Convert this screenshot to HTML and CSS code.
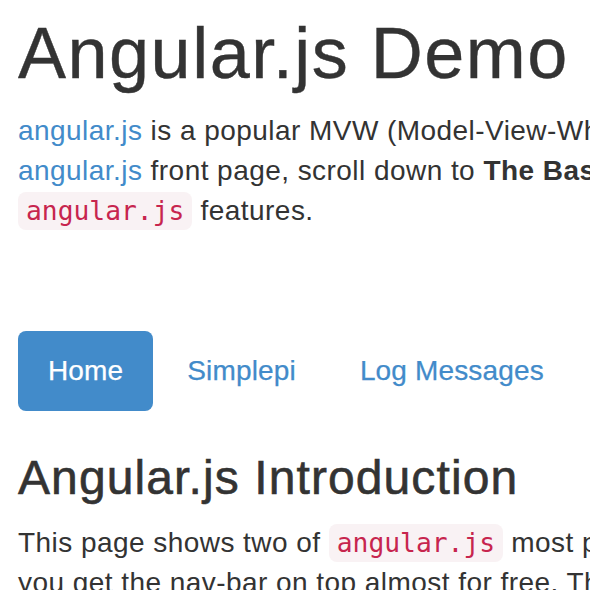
FILE: index.html
```html
<!DOCTYPE html>
<html lang="en">
<head>
<meta charset="utf-8">
<title>Angular.js Demo</title>
<link rel="stylesheet" href="styles.css">
</head>
<body>
<div class="container">
  <h1 class="title">Angular.js Demo</h1>
  <p class="lead-text"><a href="#">angular.js</a> is a popular MVW (Model-View-Whatever) framework from Google. Go to the<br><a href="#">angular.js</a> front page, scroll down to <strong>The Basics</strong> and read about some of the<br><code>angular.js</code> features.</p>
  <ul class="nav-pills">
    <li class="pill active"><a href="#">Home</a></li>
    <li class="pill"><a href="#">Simplepi</a></li>
    <li class="pill"><a href="#">Log Messages</a></li>
  </ul>
  <h2 class="section-title">Angular.js Introduction</h2>
  <p class="body-text">This page shows two of <code>angular.js</code> most powerful features. Using bootstrap,<br>you get the nav-bar on top almost for free. The rest of the page is angular.js.</p>
</div>
</body>
</html>
```
FILE: styles.css
```css
html, body {
  margin: 0;
  padding: 0;
  overflow: hidden;
  background: #fff;
}
body {
  font-family: "Liberation Sans", Arial, sans-serif;
  font-size: 28px;
  line-height: 40px;
  letter-spacing: 0.45px;
  color: #333;
}
.container {
  padding: 0 18px;
  width: 1400px;
}
a {
  color: #428bca;
  text-decoration: none;
}
.title {
  font-size: 72px;
  font-weight: 500;
  line-height: 1.1;
  letter-spacing: 1.5px;
  margin: 14px 0 0;
  -webkit-text-stroke: 0.4px #333;
}
.lead-text {
  margin: 18px 0 0;
  white-space: nowrap;
}
strong {
  font-weight: 700;
}
code {
  font-family: "DejaVu Sans Mono", Menlo, monospace;
  font-size: 26.3px;
  letter-spacing: 0;
  color: #c7254e;
  background: #f9f2f4;
  padding: 4px 8px;
  border-radius: 8px;
}
.nav-pills {
  list-style: none;
  margin: 100px 0 0;
  padding: 0;
  display: flex;
  gap: 4px;
}
.pill a {
  display: block;
  padding: 20px 30px;
  border-radius: 8px;
  line-height: 40px;
  letter-spacing: 0.15px;
  -webkit-text-stroke: 0.25px currentColor;
}
.pill.active a {
  background: #428bca;
  color: #fff;
}
.section-title {
  font-size: 48px;
  font-weight: 500;
  line-height: 1.1;
  letter-spacing: 1.1px;
  margin: 41px 0 0;
  -webkit-text-stroke: 0.6px #333;
}
.body-text {
  margin: 18px 0 0;
  white-space: nowrap;
}
```
